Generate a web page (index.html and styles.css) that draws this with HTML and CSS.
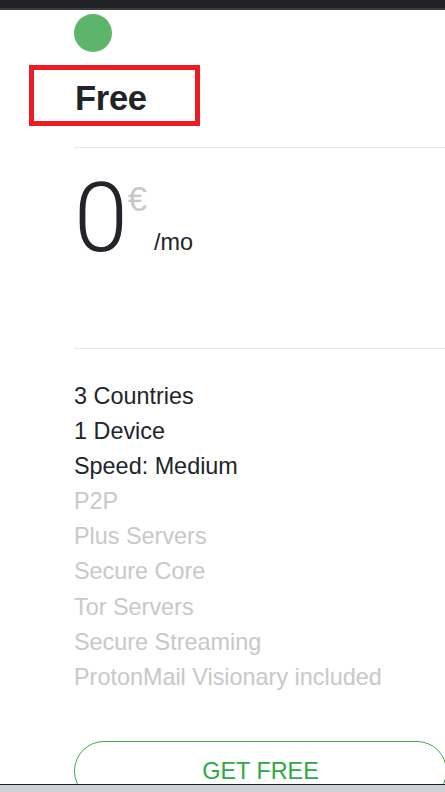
FILE: index.html
```html
<!DOCTYPE html>
<html lang="en">
<head>
<meta charset="utf-8">
<title>Free plan</title>
<link rel="stylesheet" href="styles.css">
</head>
<body>
<div class="page">
  <div class="topbar"></div>
  <div class="topstrip"></div>
  <main class="main">
    <div class="card">
      <div class="dot"></div>
      <div class="title-box"><h2 class="title">Free</h2></div>
      <hr class="sep sep-top">
      <div class="price">
        <span class="amount">0</span>
        <span class="cur">€</span>
        <span class="per">/mo</span>
      </div>
      <hr class="sep sep-bottom">
      <ul class="features">
        <li>3 Countries</li>
        <li>1 Device</li>
        <li>Speed: Medium</li>
        <li class="off">P2P</li>
        <li class="off">Plus Servers</li>
        <li class="off">Secure Core</li>
        <li class="off">Tor Servers</li>
        <li class="off">Secure Streaming</li>
        <li class="off">ProtonMail Visionary included</li>
      </ul>
      <button class="cta" type="button">GET FREE</button>
    </div>
  </main>
  <div class="bottombar"></div>
</div>
</body>
</html>
```
FILE: styles.css
```css
* { box-sizing: border-box; }
html, body { margin: 0; padding: 0; background: #fff; }
body {
  font-family: "Liberation Sans", Arial, sans-serif;
  color: #212529;
  overflow: hidden;
}
.page {
  width: 445px;
  height: 792px;
  display: flex;
  flex-direction: column;
  overflow: hidden;
}
.topbar { height: 8px; background: #202124; flex: none; }
.topstrip { height: 2px; background: #3a3b3e; flex: none; }
.main { flex: 1; overflow: hidden; }
.bottombar {
  flex: none;
  height: 8px;
  border-top: 1px solid #1e1f22;
  background: #cdd0d6;
}
.card {
  width: 447px;
  padding-left: 74px;
}
.dot {
  width: 38px;
  height: 38px;
  border-radius: 50%;
  background: #5cb56a;
  margin-top: 4px;
}
.title-box {
  margin-top: 13px;
  margin-left: -45px;
  width: 171px;
  border: 5px solid #ed1c24;
  padding: 5px 0 0 41px;
  height: 61px;
}
.title {
  margin: 0;
  font-size: 34.5px;
  font-weight: 700;
  line-height: 46px;
  letter-spacing: -0.3px;
}
.sep {
  margin: 0;
  border: 0;
  height: 1px;
  background: #e8e8e8;
}
.sep-top { margin-top: 21px; }
.price {
  display: flex;
  align-items: flex-start;
  height: 200px;
  padding-top: 22px;
}
.amount {
  font-family: Roboto, "Liberation Sans", sans-serif;
  font-weight: 300;
  font-size: 97px;
  line-height: 97px;
}
.cur {
  font-size: 34.5px;
  line-height: 34.5px;
  color: #c8c8c8;
  margin-top: 12px;
  margin-left: 0;
}
.per {
  font-size: 23.4px;
  line-height: 23px;
  margin-top: 61px;
  margin-left: 7px;
}
.features {
  list-style: none;
  margin: 30px 0 0;
  padding: 0;
  font-size: 23.4px;
  line-height: 35.1px;
}
.features .off { color: #c8c8c8; }
.cta {
  display: block;
  margin-top: 46px;
  width: 373px;
  height: 60px;
  border: 1px solid #3aab4a;
  border-radius: 30px;
  background: #fff;
  color: #2da943;
  font-family: "Liberation Sans", Arial, sans-serif;
  font-size: 23.4px;
  line-height: 58px;
  padding: 0;
  text-align: center;
}
```
